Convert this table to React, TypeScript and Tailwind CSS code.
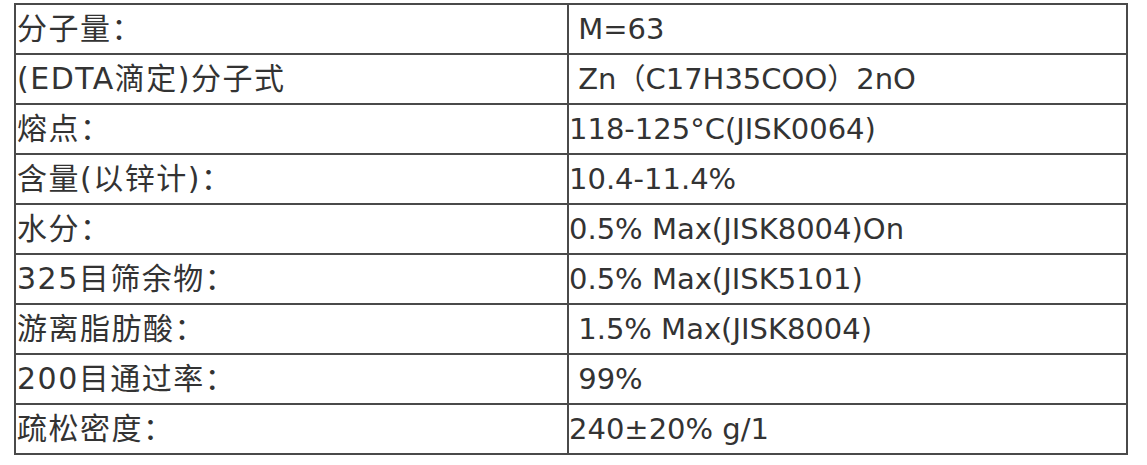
const rows: [string, string][] = [
  ["分子量：", " M=63"],
  ["(EDTA滴定)分子式", " Zn（C17H35COO）2nO"],
  ["熔点：", "118-125°C(JISK0064)"],
  ["含量(以锌计)：", "10.4-11.4%"],
  ["水分：", "0.5% Max(JISK8004)On"],
  ["325目筛余物：", "0.5% Max(JISK5101)"],
  ["游离脂肪酸：", " 1.5% Max(JISK8004)"],
  ["200目通过率：", " 99%"],
  ["疏松密度：", "240±20% g/1"],
];

export default function App() {
  return (
    <div className="bg-white w-[1147px] h-[465px] pt-[3px] pl-[14px]">
      <table
        className="border-collapse border-2 border-[#4a4a4a] w-[1114px] table-fixed text-[#333]"
        style={{ fontFamily: '"DejaVu Sans", "Noto Sans CJK SC", sans-serif' }}
      >
        <colgroup>
          <col className="w-[553px]" />
          <col />
        </colgroup>
        <tbody>
          {rows.map(([k, v]) => (
            <tr key={k} className="h-[50px]">
              <td className="border-2 border-[#4a4a4a] px-[1px] py-0 align-middle whitespace-pre leading-none text-[30px] tracking-[1.5px]">
                {k}
              </td>
              <td className="border-2 border-[#4a4a4a] px-0 py-0 align-middle whitespace-pre leading-none text-[29px]">
                {v}
              </td>
            </tr>
          ))}
        </tbody>
      </table>
    </div>
  );
}
